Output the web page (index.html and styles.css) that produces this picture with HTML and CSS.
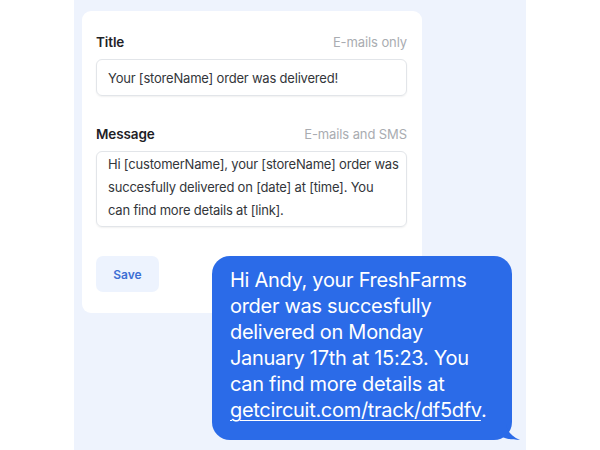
FILE: index.html
```html
<!DOCTYPE html>
<html>
<head>
<meta charset="utf-8">
<link rel="stylesheet" href="styles.css">
</head>
<body>
<div class="panel">
  <div class="card">
    <div class="label-row">
      <span class="label">Title</span>
      <span class="hint">E-mails only</span>
    </div>
    <div class="field field-input">Your [storeName] order was delivered!</div>
    <div class="label-row row-gap">
      <span class="label">Message</span>
      <span class="hint">E-mails and SMS</span>
    </div>
    <div class="field field-area">Hi [customerName], your [storeName] order was<br>succesfully delivered on [date] at [time]. You<br>can find more details at [link].</div>
    <button class="save">Save</button>
  </div>
  <div class="bubble">
    <p>Hi Andy, your FreshFarms order was succesfully delivered on Monday January 17th at 15:23. You can find more details at <u>getcircuit.com/track/df5dfv</u>.</p>
    <svg class="tail" width="20" height="16" viewBox="0 0 20 16"><path d="M0 0 L6 0 C7 7 11 12 20 16 C12 16 6 15 0 12 Z" fill="#2b6be8"/></svg>
  </div>
</div>
</body>
</html>
```
FILE: styles.css
```css
html, body {
  margin: 0;
  padding: 0;
  background: #ffffff;
  font-family: Inter, "Liberation Sans", sans-serif;
}
.panel {
  position: relative;
  margin-left: 74px;
  width: 452px;
  height: 450px;
  background: #eef3fd;
  padding-top: 11px;
  box-sizing: border-box;
}
.card {
  margin-left: 8px;
  width: 340px;
  height: 302px;
  box-sizing: border-box;
  background: #fff;
  border-radius: 9px;
  padding: 21px 15px 0 14px;
  display: flex;
  flex-direction: column;
}
.label-row {
  display: flex;
  justify-content: space-between;
  align-items: center;
  height: 20px;
  margin-bottom: 7px;
}
.row-gap { margin-top: 28px; }
.label {
  font-size: 13.5px;
  font-weight: 600;
  color: #1e2126;
  letter-spacing: -0.1px;
}
.hint {
  font-size: 13px;
  color: #a9acb1;
  letter-spacing: -0.1px;
}
.field {
  border: 1px solid #e2e5e9;
  border-radius: 6px;
  box-shadow: 0 1px 2px rgba(0,0,0,0.06);
  font-size: 13px;
  letter-spacing: -0.2px;
  color: #33363a;
  box-sizing: border-box;
}
.field-input {
  height: 37px;
  padding: 0 11px;
  display: flex;
  align-items: center;
}
.field-area {
  height: 76px;
  padding: 1px 0 0 11px;
  line-height: 23px;
  white-space: nowrap;
}
.save {
  margin-top: 29px;
  width: 63px;
  height: 36px;
  border: none;
  border-radius: 7px;
  background: #edf3fe;
  color: #3c6fd4;
  font-family: Inter, "Liberation Sans", sans-serif;
  font-weight: 600;
  font-size: 12px;
  padding: 0;
}
.bubble {
  position: absolute;
  left: 138px;
  top: 256px;
  width: 300px;
  height: 184px;
  box-sizing: border-box;
  background: #2b6be8;
  border-radius: 18px;
  padding: 11px 10px 0 18px;
  color: #fff;
}
.bubble p {
  margin: 0;
  font-size: 20px;
  line-height: 26px;
  letter-spacing: -0.3px;
}
.bubble u {
  text-underline-offset: 3px;
  text-decoration-thickness: 1px;
}
.tail {
  position: absolute;
  right: -8px;
  bottom: 0;
}
```
